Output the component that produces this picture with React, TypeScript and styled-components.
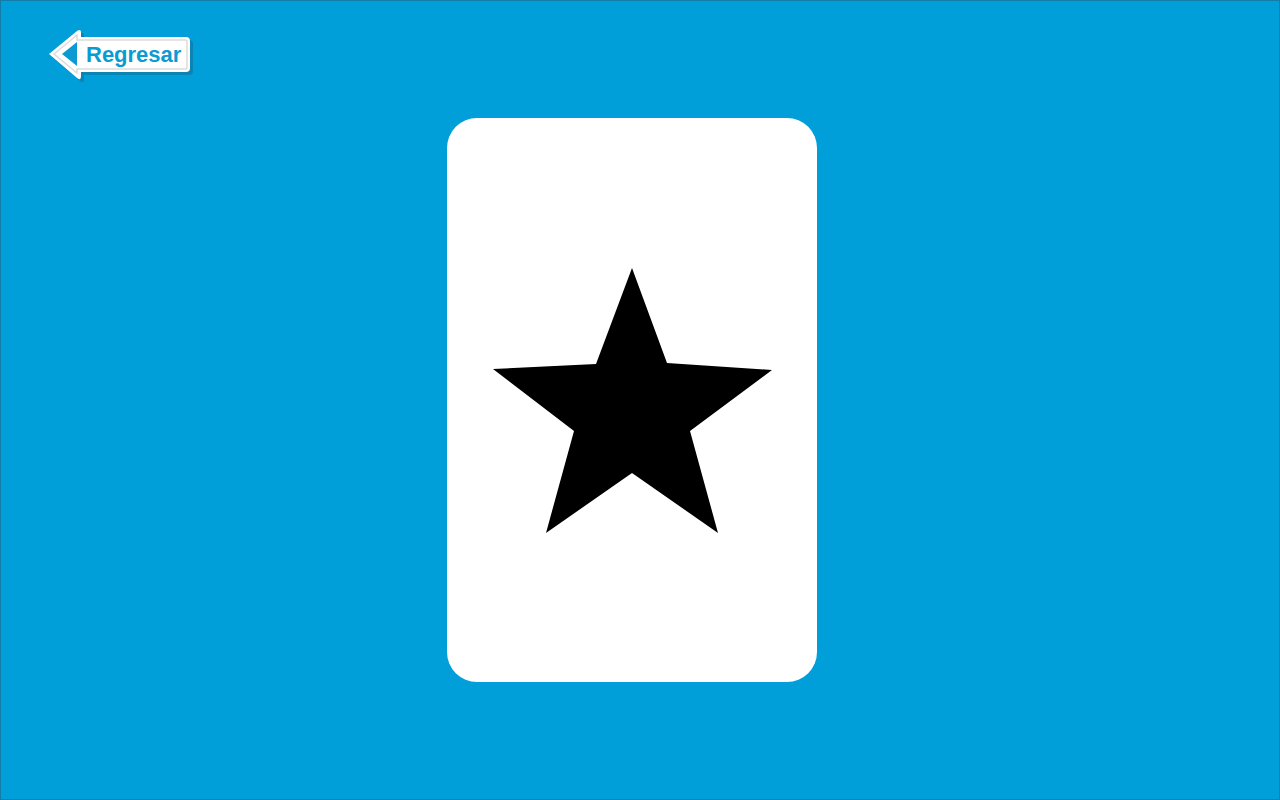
import styled, { createGlobalStyle } from "styled-components";

const GlobalStyle = createGlobalStyle`
  html, body {
    margin: 0;
    padding: 0;
    background: #009fd9;
  }
  * {
    box-sizing: border-box;
  }
`;

const Page = styled.div`
  width: 1280px;
  height: 800px;
  background: #009fd9;
  border: 1px solid #157ca8;
  display: flex;
  flex-direction: column;
  font-family: "Liberation Sans", Arial, sans-serif;
  overflow: hidden;
`;

const Header = styled.header`
  padding: 24px 0 0 44px;
  display: flex;
`;

const BackButton = styled.button`
  position: relative;
  width: 155px;
  height: 59px;
  padding: 0 0 0 41px;
  margin: 0;
  border: none;
  background: transparent;
  display: inline-flex;
  align-items: center;
  cursor: pointer;
`;

const ButtonShape = styled.svg`
  position: absolute;
  left: 0;
  top: 0;
  width: 155px;
  height: 62px;
`;

const Label = styled.span`
  position: relative;
  font-family: "Liberation Sans", Arial, sans-serif;
  font-weight: bold;
  font-size: 22px;
  color: #0a9bd2;
`;

const Main = styled.main`
  padding: 34px 0 0 446px;
  display: flex;
`;

const Card = styled.div`
  width: 370px;
  height: 564px;
  background: #ffffff;
  border-radius: 30px;
  display: flex;
  align-items: center;
  justify-content: center;
`;

const StarIcon = styled.svg`
  width: 279px;
  height: 265px;
  display: block;
`;

const arrowPath =
  "M4,29 L32,6 Q36,3 36,8 L36,12 L141,12 Q145,12 145,16 L145,43 Q145,47 141,47 L36,47 L36,51 Q36,56 32,53 Z";

export default function App() {
  return (
    <>
      <GlobalStyle />
      <Page>
        <Header>
          <BackButton type="button">
            <ButtonShape viewBox="0 0 155 62">
              <path d={arrowPath} fill="#0a7fae" transform="translate(3 3)" opacity="0.85" />
              <path d={arrowPath} fill="#ffffff" />
              <path
                d="M9,29 L32,10 L32,15 L140,15 Q142,15 142,17 L142,42 Q142,44 140,44 L32,44 L32,48 Z"
                fill="none"
                stroke="#dcdcdc"
                strokeWidth="1.5"
              />
              <polygon points="17,29 32,17 32,41" fill="#0a9bd2" />
            </ButtonShape>
            <Label>Regresar</Label>
          </BackButton>
        </Header>
        <Main>
          <Card>
            <StarIcon viewBox="493 267 279 265">
              <polygon
                points="632,267 667,362 772,369 690,430 718,532 632,472 546,532 574,430 493,368 596,363"
                fill="#000000"
              />
            </StarIcon>
          </Card>
        </Main>
      </Page>
    </>
  );
}
